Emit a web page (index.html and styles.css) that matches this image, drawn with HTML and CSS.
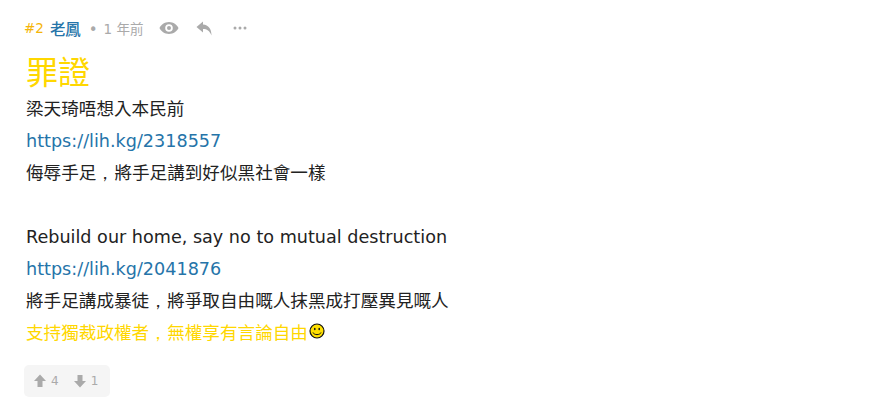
FILE: index.html
```html
<!DOCTYPE html>
<html lang="zh-Hant">
<head>
  <meta charset="UTF-8">
  <title>#2 老鳳</title>
  <link rel="stylesheet" href="styles.css">
</head>
<body>
  <div class="post">
    <div class="post-head">
      <span class="post-num">#2</span>
      <a class="post-user">老鳳</a>
      <span class="post-dot">•</span>
      <span class="post-time">1 年前</span>
      <svg class="icon icon-eye" width="20" height="14" viewBox="0 0 20 14">
        <path fill-rule="evenodd" d="M10 1C5.500 1 2 3.800 .5 7 2 10.200 5.500 13 10 13s8-2.800 9.500-6C18 3.800 14.500 1 10 1zm0 2.200a3.800 3.800 0 1 1 0 7.600 3.800 3.800 0 0 1 0-7.600z"/>
        <circle cx="10" cy="7" r="2"/>
      </svg>
      <svg class="icon icon-reply" width="17" height="15" viewBox="0 0 17 15">
        <path d="M7 .5 .5 6 7 11.500V8c4 0 6.500 1.500 8.500 6.500C15.500 8 12.500 4 7 3.500z"/>
      </svg>
      <svg class="icon icon-more" width="14" height="4" viewBox="0 0 14 4">
        <circle cx="2" cy="2" r="1.500"/>
        <circle cx="7" cy="2" r="1.500"/>
        <circle cx="12" cy="2" r="1.500"/>
      </svg>
    </div>

    <div class="post-body">
      <div class="big yellow">罪證</div>
      <div class="line">梁天琦唔想入本民前</div>
      <div class="line"><a>https://lih.kg/2318557</a></div>
      <div class="line">侮辱手足<span class="comma">，</span>將手足講到好似黑社會一樣</div>
      <div class="line"><br></div>
      <div class="line">Rebuild our home, say no to mutual destruction</div>
      <div class="line"><a>https://lih.kg/2041876</a></div>
      <div class="line">將手足講成暴徒<span class="comma">，</span>將爭取自由嘅人抹黑成打壓異見嘅人</div>
      <div class="line yellow">支持獨裁政權者<span class="comma">，</span>無權享有言論自由<svg class="smiley" width="16" height="16" viewBox="0 0 16 16">
          <circle cx="8" cy="8" r="7" fill="#ffe000" stroke="#111" stroke-width="1.200"/>
          <ellipse cx="5.800" cy="6" rx=".8" ry="1.300" fill="#111"/>
          <ellipse cx="10.200" cy="6" rx=".8" ry="1.300" fill="#111"/>
          <path d="M4 9.500c1 2.800 7 2.800 8 0" fill="none" stroke="#111" stroke-width="1"/>
        </svg></div>
    </div>

    <div class="votes">
      <span class="vote">
        <svg width="12" height="14" viewBox="0 0 12 14"><path d="M6 .5 12 7H8.500v6h-5V7H0z"/></svg>
        4
      </span>
      <span class="vote">
        <svg width="12" height="14" viewBox="0 0 12 14"><path d="M6 13.500 12 7H8.500V1h-5v6H0z"/></svg>
        1
      </span>
    </div>
  </div>
</body>
</html>
```

FILE: styles.css
```css
body {
  margin: 0;
  background: #fff;
  font-family: "DejaVu Sans", "Noto Sans CJK TC", sans-serif;
  color: #222;
}

.post {
  padding: 16px 24px 0 26px;
}

.post-head {
  display: flex;
  align-items: center;
  height: 24px;
  font-size: 13.500px;
  margin-left: -2px;
}

.post-num {
  color: #f5b50a;
  margin-right: 6px;
}

.post-user {
  color: #2574a9;
  font-size: 15.400px;
  font-weight: 500;
}

.post-dot {
  color: #aaa;
  font-size: 15px;
  margin: 0 6px 0 8px;
  padding-top: 3px;
}

.post-time {
  color: #aaa;
  margin-right: 16px;
}

.icon {
  fill: #aaa;
}

.icon-eye {
  margin-right: 17px;
}

.icon-reply {
  margin-right: 20px;
}

.post-body {
  margin-top: 13px;
}

.big {
  font-size: 32px;
  line-height: 40px;
}

.yellow {
  color: #ffd700;
}

.line {
  font-size: 17.600px;
  line-height: 32px;
}

.line a {
  color: #2574a9;
}

/* la virgule du fallback systeme est centree comme sur la reference */
.comma {
  font-family: "DejaVu Sans", sans-serif;
}

.smiley {
  vertical-align: 0;
  margin-left: 1px;
}

.votes {
  display: inline-flex;
  gap: 15px;
  margin-top: 16px;
  margin-left: -2px;
  padding: 0 12px 0 10px;
  height: 32px;
  align-items: center;
  background: #f5f5f5;
  border-radius: 5px;
  font-size: 12px;
  color: #aaa;
}

.vote {
  display: flex;
  align-items: center;
  gap: 5px;
}

.vote svg {
  fill: #aaa;
}
```
